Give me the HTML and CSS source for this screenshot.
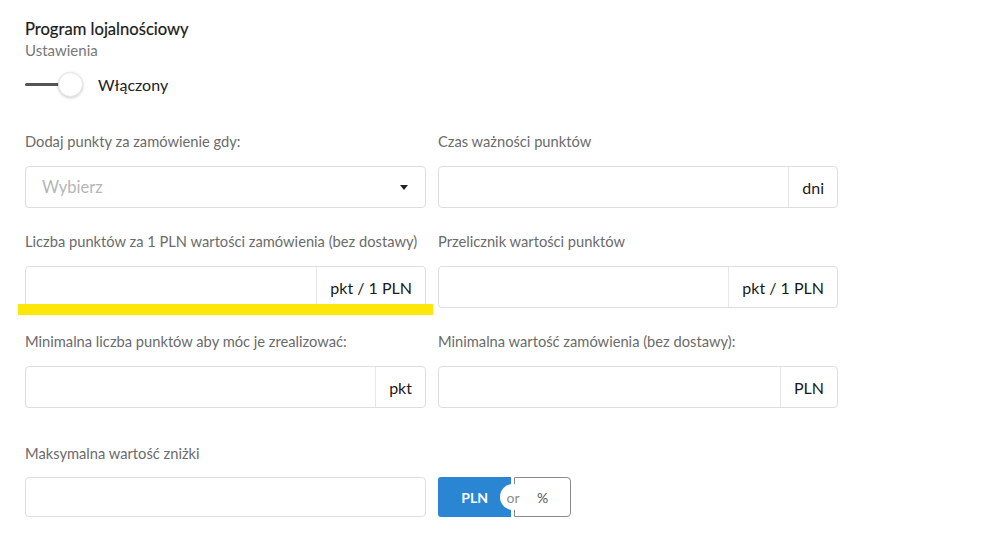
FILE: index.html
```html
<!DOCTYPE html>
<html lang="pl">
<head>
    <meta charset="UTF-8">
    <meta name="viewport" content="width=device-width, initial-scale=1.0">
    <title>Program lojalnościowy</title>
    <link rel="stylesheet" href="styles.css">
</head>
<body>
    <div class="page">
        <h1 class="title">Program lojalnościowy</h1>
        <p class="subtitle">Ustawienia</p>

        <div class="switch-row">
            <span class="switch">
                <span class="switch-track"></span>
                <span class="switch-knob"></span>
            </span>
            <span class="switch-label">Włączony</span>
        </div>

        <div class="form-grid">
            <div class="field">
                <label>Dodaj punkty za zamówienie gdy:</label>
                <div class="select">
                    <span class="placeholder">Wybierz</span>
                    <span class="caret"></span>
                </div>
            </div>
            <div class="field">
                <label>Czas ważności punktów</label>
                <div class="input-group">
                    <input type="text">
                    <span class="addon">dni</span>
                </div>
            </div>

            <div class="field highlighted">
                <label>Liczba punktów za 1 PLN wartości zamówienia (bez dostawy)</label>
                <div class="input-group">
                    <input type="text">
                    <span class="addon">pkt / 1 PLN</span>
                </div>
                <span class="marker"></span>
            </div>
            <div class="field">
                <label>Przelicznik wartości punktów</label>
                <div class="input-group">
                    <input type="text">
                    <span class="addon">pkt / 1 PLN</span>
                </div>
            </div>

            <div class="field">
                <label>Minimalna liczba punktów aby móc je zrealizować:</label>
                <div class="input-group">
                    <input type="text">
                    <span class="addon">pkt</span>
                </div>
            </div>
            <div class="field">
                <label>Minimalna wartość zamówienia (bez dostawy):</label>
                <div class="input-group">
                    <input type="text">
                    <span class="addon">PLN</span>
                </div>
            </div>

            <div class="field last">
                <label>Maksymalna wartość zniżki</label>
                <div class="input-group small">
                    <input type="text">
                </div>
            </div>
            <div class="field last">
                <label>&nbsp;</label>
                <div class="unit-toggle">
                    <span class="unit active">PLN</span>
                    <span class="unit-or">or</span>
                    <span class="unit">%</span>
                </div>
            </div>
        </div>
    </div>
</body>
</html>
```

FILE: styles.css
```css
body {
    font-family: Lato, "Open Sans", sans-serif;
    margin: 0;
    padding: 0;
    background-color: #fff;
    color: #222;
}

.page {
    padding: 19px 0 0 25px;
}

.title {
    font-size: 16.6px;
    font-weight: normal;
    line-height: 20px;
    color: #1a1a1a;
    margin: 0;
    -webkit-text-stroke: 0.2px #1a1a1a;
}

.subtitle {
    font-size: 15px;
    line-height: 18px;
    color: #777;
    margin: 2px 0 0 0;
}

.switch-row {
    display: flex;
    align-items: center;
    height: 24px;
    margin-top: 13px;
}

.switch {
    position: relative;
    width: 58px;
    height: 24px;
    display: inline-block;
}

.switch-track {
    position: absolute;
    left: 0;
    top: 11px;
    width: 40px;
    height: 3px;
    background-color: #555;
    border-radius: 2px;
}

.switch-knob {
    position: absolute;
    left: 33px;
    top: 0;
    width: 23px;
    height: 23px;
    border-radius: 50%;
    background-color: #fff;
    border: 1px solid #e4e4e4;
    box-shadow: 0 1px 3px rgba(0,0,0,0.2);
}

.switch-label {
    font-size: 16px;
    margin-left: 15px;
    color: #222;
}

.form-grid {
    display: grid;
    grid-template-columns: 401px 400px;
    column-gap: 12px;
    row-gap: 24px;
    margin-top: 36px;
}

.field {
    position: relative;
    display: flex;
    flex-direction: column;
}

.field label {
    font-size: 14.7px;
    line-height: 18px;
    color: #6b6b6b;
    margin-bottom: 16px;
}

.field.last {
    margin-top: 12px;
}

.field.last label {
    margin-bottom: 15px;
}

.select, .input-group {
    display: flex;
    align-items: stretch;
    height: 42px;
    border: 1px solid #dedede;
    border-radius: 4px;
    box-sizing: border-box;
    background-color: #fff;
}

.input-group.small {
    height: 40px;
}

.select {
    align-items: center;
    justify-content: space-between;
    padding: 0 16px;
}

.placeholder {
    font-size: 16.5px;
    color: #b5b5b5;
}

.caret {
    width: 0;
    height: 0;
    border-left: 4px solid transparent;
    border-right: 4px solid transparent;
    border-top: 5px solid #222;
    margin-right: 1px;
}

.input-group input {
    flex-grow: 1;
    min-width: 0;
    border: none;
    outline: none;
    background: transparent;
    padding: 0 12px;
    font-family: inherit;
    font-size: 16px;
}

.addon {
    display: flex;
    align-items: center;
    padding: 0 13px;
    border-left: 1px solid #e6e6e6;
    font-size: 16px;
    color: #1a1a1a;
}

.marker {
    position: absolute;
    left: -7px;
    right: -7px;
    bottom: -7px;
    height: 11px;
    background-color: #fde70b;
}

.unit-toggle {
    position: relative;
    display: flex;
    height: 40px;
    width: 133px;
}

.unit {
    display: flex;
    align-items: center;
    justify-content: center;
    font-size: 14px;
    color: #555;
}

.unit.active {
    width: 74px;
    background-color: #2a86d2;
    color: #fff;
    font-weight: bold;
    border-radius: 3px 0 0 3px;
}

.unit:last-child {
    width: 55px;
    border: 1px solid #8a8a8a;
    border-radius: 0 4px 4px 0;
    margin-left: 3px;
}

.unit-or {
    position: absolute;
    left: 62px;
    top: 7px;
    width: 26px;
    height: 26px;
    border-radius: 50%;
    background-color: #fff;
    display: flex;
    align-items: center;
    justify-content: center;
    font-size: 14px;
    color: #8d8d8d;
}
```
